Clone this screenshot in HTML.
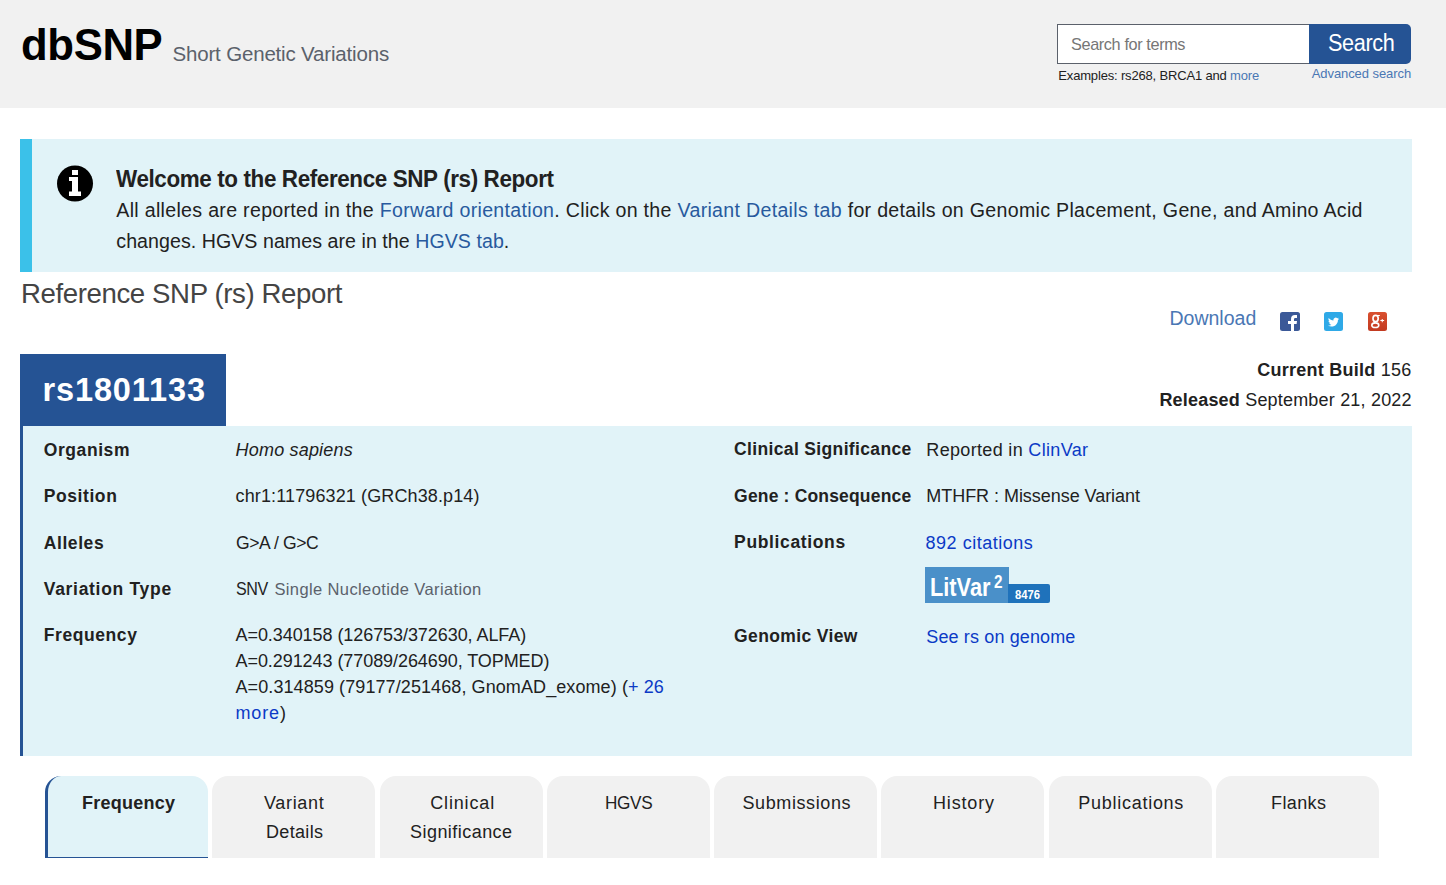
<!DOCTYPE html>
<html><head><meta charset="utf-8">
<style>
html,body{margin:0;padding:0;width:1446px;height:885px;overflow:hidden;background:#fff;font-family:"Liberation Sans",sans-serif;}
.t,.t2{position:absolute;white-space:nowrap;line-height:normal;}
.abs{position:absolute;}
#hdr{left:0;top:0;width:1446px;height:108px;background:#f1f1f1;}
#inp{left:1057px;top:24px;width:252px;height:38px;background:#fff;border:1px solid #5b616b;border-right:none;}
#btn{left:1309px;top:24px;width:102px;height:40px;background:#255394;border-radius:0 5px 5px 0;}
#alert{left:20px;top:139px;width:1392px;height:133px;background:#e1f3f8;}
#alertb{left:20px;top:139px;width:12px;height:133px;background:#3bc1e9;}
#rsbox{left:20px;top:354px;width:206px;height:72px;background:#255394;}
#sum{left:20px;top:426px;width:1392px;height:330px;background:#e1f3f8;}
#sumb{left:20px;top:426px;width:3px;height:330px;background:#255394;}
.tab{position:absolute;top:776px;width:163px;height:82px;background:#f1f1f1;border-radius:16px 16px 0 0;}
.tab.act{background:#e1f3f8;box-sizing:border-box;border-left:3px solid #255394;border-bottom:1px solid #255394;}
.soc{position:absolute;top:312px;width:19px;height:19px;border-radius:2px;}
</style></head><body>
<div class="abs" id="hdr"></div>
<div class="abs" id="inp"></div>
<div class="abs" id="btn"></div>
<div class="abs" id="alert"></div>
<div class="abs" id="alertb"></div>
<svg class="abs" style="left:57px;top:165px" width="37" height="37" viewBox="0 0 37 37">
 <circle cx="18" cy="18.5" r="18" fill="#000"/>
 <rect x="15" y="5" width="6" height="5" fill="#fff"/>
 <path d="M12 12 H21 V26.5 H24 V31 H12 V26.5 H15 V16 H12 Z" fill="#fff"/>
</svg>
<svg class="abs" style="left:1280px;top:312px" width="20" height="19" viewBox="0 0 20 19">
 <rect x="0" y="0" width="20" height="19" rx="2.5" fill="#3b5998"/>
 <path d="M11 19 V12 H8 V9 H11 V7.2 Q11 3 15 3 H17 V6 H15.2 Q14 6 14 7.3 V9 H17 L16.6 12 H14 V19 Z" fill="#fff"/>
</svg>
<svg class="abs" style="left:1324px;top:312px" width="19" height="19" viewBox="0 0 19 19">
 <rect x="0" y="0" width="19" height="19" rx="2.5" fill="#2fa9e7"/>
 <g transform="translate(4,4.6) scale(0.46)"><path fill="#fff" d="M23.953 4.57a10 10 0 01-2.825.775 4.958 4.958 0 002.163-2.723c-.951.555-2.005.959-3.127 1.184a4.92 4.92 0 00-8.384 4.482C7.69 8.095 4.067 6.13 1.64 3.162a4.822 4.822 0 00-.666 2.475c0 1.71.87 3.213 2.188 4.096a4.904 4.904 0 01-2.228-.616v.06a4.923 4.923 0 003.946 4.827 4.996 4.996 0 01-2.212.085 4.936 4.936 0 004.604 3.417 9.867 9.867 0 01-6.102 2.105c-.39 0-.779-.023-1.17-.067a13.995 13.995 0 007.557 2.209c9.053 0 13.998-7.496 13.998-13.985 0-.21 0-.42-.015-.63A9.935 9.935 0 0024 4.59z"/></g>
</svg>
<svg class="abs" style="left:1368px;top:312px" width="19" height="19" viewBox="0 0 19 19">
 <defs><linearGradient id="gp" x1="0" y1="0" x2="0" y2="1"><stop offset="0" stop-color="#d9502f"/><stop offset="1" stop-color="#c23a20"/></linearGradient></defs>
 <rect x="0" y="0" width="19" height="19" rx="2.5" fill="url(#gp)"/>
 <ellipse cx="7.6" cy="6.4" rx="2.6" ry="3.1" fill="none" stroke="#fff" stroke-width="1.7"/>
 <path d="M7.2 3.1 H11.8 V4.1 H9.6 Z" fill="#fff"/>
 <path d="M6.6 9.2 Q5.6 10.4 7.4 10.9" fill="none" stroke="#fff" stroke-width="1.3"/>
 <ellipse cx="7.3" cy="13.2" rx="3.5" ry="2.3" fill="none" stroke="#fff" stroke-width="1.6"/>
 <path d="M12.4 8.1 H16.1 V9.1 H12.4 Z M13.75 6.9 H14.75 V10.3 H13.75 Z" fill="#fff"/>
</svg>
<div class="abs" id="rsbox"></div>
<div class="abs" id="sum"></div>
<div class="abs" id="sumb"></div>
<div class="abs" style="left:925px;top:567px;width:84px;height:36px;background:#4a90c9"></div>
<div class="abs" style="left:1008px;top:584px;width:42px;height:19px;background:#1f72bb;border-radius:0 2px 2px 0"></div>
<div class="t2" style="left:930px;top:573px;font-size:25px;font-weight:bold;color:#fff;transform:scaleX(0.87);transform-origin:0 0;line-height:normal">LitVar</div>
<div class="t2" style="left:994px;top:572px;font-size:18px;font-weight:bold;color:#fff;line-height:normal;transform:scaleX(0.85);transform-origin:0 0">2</div>
<div class="t2" style="left:1015px;top:588px;font-size:12.5px;font-weight:bold;color:#fff;line-height:normal;transform:scaleX(0.9);transform-origin:0 0">8476</div>
<div class="tab act" style="left:45.00px"></div>
<div class="tab" style="left:212.25px"></div>
<div class="tab" style="left:379.50px"></div>
<div class="tab" style="left:546.75px"></div>
<div class="tab" style="left:714.00px"></div>
<div class="tab" style="left:881.25px"></div>
<div class="tab" style="left:1048.50px"></div>
<div class="tab" style="left:1215.75px"></div>
<div class="t" id="dbsnp" style="left:21.00px;top:19.16px;font-size:44.80px;letter-spacing:-0.400px;color:#000;transform:scaleX(0.9760);transform-origin:0 0;font-weight:bold;"><span>dbSNP</span></div>
<div class="t" id="sgv" style="left:172.50px;top:41.65px;font-size:20.50px;letter-spacing:-0.174px;color:#5b616b;"><span>Short Genetic Variations</span></div>
<div class="t" id="ph" style="left:1070.80px;top:35.12px;font-size:17.00px;letter-spacing:-0.400px;color:#767676;transform:scaleX(0.9570);transform-origin:0 0;"><span>Search for terms</span></div>
<div class="t" id="srch" style="left:1328.00px;top:30.48px;font-size:23.00px;letter-spacing:-0.400px;color:#fff;transform:scaleX(0.9411);transform-origin:0 0;"><span>Search</span></div>
<div class="t" id="ex" style="left:1058.30px;top:68.44px;font-size:13.00px;letter-spacing:-0.167px;color:#212121;"><span>Examples: rs268, BRCA1 and <span style="color:#4a77b4">more</span></span></div>
<div class="t" id="adv" style="left:1311.70px;top:65.94px;font-size:13.00px;letter-spacing:-0.071px;color:#4a77b4;"><span>Advanced search</span></div>
<div class="t" id="wt" style="left:116.30px;top:165.99px;font-size:23.10px;letter-spacing:-0.400px;color:#212121;transform:scaleX(0.9718);transform-origin:0 0;font-weight:bold;"><span>Welcome to the Reference SNP (rs) Report</span></div>
<div class="t" id="l1" style="left:116.30px;top:198.51px;font-size:19.60px;letter-spacing:0.302px;color:#212121;"><span>All alleles are reported in the <span style="color:#285a9e">Forward orientation</span>. Click on the <span style="color:#285a9e">Variant Details tab</span> for details on Genomic Placement, Gene, and Amino Acid</span></div>
<div class="t" id="l2" style="left:116.30px;top:229.66px;font-size:19.60px;letter-spacing:0.051px;color:#212121;"><span>changes. HGVS names are in the <span style="color:#285a9e">HGVS tab</span>.</span></div>
<div class="t" id="rsr" style="left:21.20px;top:277.39px;font-size:28.30px;letter-spacing:-0.400px;color:#444;transform:scaleX(0.9753);transform-origin:0 0;"><span>Reference SNP (rs) Report</span></div>
<div class="t" id="dl" style="left:1169.50px;top:306.85px;font-size:19.50px;letter-spacing:0.000px;color:#4a77b4;"><span>Download</span></div>
<div class="t" id="cb" style="left:1257.20px;top:360.01px;font-size:18.00px;letter-spacing:0.250px;color:#212121;"><span><b>Current Build</b> 156</span></div>
<div class="t" id="rel" style="left:1159.40px;top:389.71px;font-size:18.00px;letter-spacing:0.192px;color:#212121;"><span><b>Released</b> September 21, 2022</span></div>
<div class="t" id="rs" style="left:42.50px;top:371.89px;font-size:32.50px;letter-spacing:0.875px;color:#fff;font-weight:bold;"><span>rs1801133</span></div>
<div class="t" id="org" style="left:43.80px;top:440.36px;font-size:17.50px;letter-spacing:0.571px;color:#212121;font-weight:bold;"><span>Organism</span></div>
<div class="t" id="pos" style="left:43.80px;top:486.46px;font-size:17.50px;letter-spacing:0.571px;color:#212121;font-weight:bold;"><span>Position</span></div>
<div class="t" id="all" style="left:43.80px;top:533.26px;font-size:17.50px;letter-spacing:0.571px;color:#212121;font-weight:bold;"><span>Alleles</span></div>
<div class="t" id="vt" style="left:43.80px;top:578.96px;font-size:17.50px;letter-spacing:0.692px;color:#212121;font-weight:bold;"><span>Variation Type</span></div>
<div class="t" id="frq" style="left:43.80px;top:624.96px;font-size:17.50px;letter-spacing:0.571px;color:#212121;font-weight:bold;"><span>Frequency</span></div>
<div class="t" id="homo" style="left:235.60px;top:440.01px;font-size:18.00px;letter-spacing:0.182px;color:#212121;font-style:italic;"><span>Homo sapiens</span></div>
<div class="t" id="chr" style="left:235.60px;top:486.11px;font-size:18.00px;letter-spacing:0.120px;color:#212121;"><span>chr1:11796321 (GRCh38.p14)</span></div>
<div class="t" id="ga" style="left:235.60px;top:532.81px;font-size:18.00px;letter-spacing:-0.400px;color:#212121;transform:scaleX(0.9742);transform-origin:0 0;"><span>G&gt;A / G&gt;C</span></div>
<div class="t" id="snv" style="left:235.60px;top:578.51px;font-size:18.00px;letter-spacing:-0.400px;color:#212121;transform:scaleX(0.8926);transform-origin:0 0;"><span>SNV</span></div>
<div class="t" id="snv2" style="left:274.40px;top:579.87px;font-size:16.50px;letter-spacing:0.385px;color:#5b616b;"><span>Single Nucleotide Variation</span></div>
<div class="t" id="f1" style="left:235.50px;top:625.31px;font-size:18.00px;letter-spacing:-0.065px;color:#212121;"><span>A=0.340158 (126753/372630, ALFA)</span></div>
<div class="t" id="f2" style="left:235.50px;top:651.11px;font-size:18.00px;letter-spacing:-0.065px;color:#212121;"><span>A=0.291243 (77089/264690, TOPMED)</span></div>
<div class="t" id="f3" style="left:235.50px;top:677.21px;font-size:18.00px;letter-spacing:0.091px;color:#212121;"><span>A=0.314859 (79177/251468, GnomAD_exome) (<span style="color:#0b3ac6">+ 26</span></span></div>
<div class="t" id="f4" style="left:235.50px;top:703.21px;font-size:18.00px;letter-spacing:0.861px;color:#212121;"><span><span style="color:#0b3ac6">more</span>)</span></div>
<div class="t" id="cs" style="left:734.10px;top:439.36px;font-size:17.50px;letter-spacing:0.350px;color:#212121;font-weight:bold;"><span>Clinical Significance</span></div>
<div class="t" id="gc" style="left:734.10px;top:485.76px;font-size:17.50px;letter-spacing:0.176px;color:#212121;font-weight:bold;"><span>Gene : Consequence</span></div>
<div class="t" id="pub" style="left:734.10px;top:532.36px;font-size:17.50px;letter-spacing:0.636px;color:#212121;font-weight:bold;"><span>Publications</span></div>
<div class="t" id="gv" style="left:734.10px;top:626.36px;font-size:17.50px;letter-spacing:0.364px;color:#212121;font-weight:bold;"><span>Genomic View</span></div>
<div class="t" id="rep" style="left:926.30px;top:440.11px;font-size:18.00px;letter-spacing:0.333px;color:#212121;"><span>Reported in <span style="color:#0b3ac6">ClinVar</span></span></div>
<div class="t" id="mth" style="left:926.30px;top:485.51px;font-size:18.00px;letter-spacing:-0.043px;color:#212121;"><span>MTHFR : Missense Variant</span></div>
<div class="t" id="cit" style="left:925.60px;top:532.91px;font-size:18.00px;letter-spacing:0.500px;color:#0b3ac6;"><span>892 citations</span></div>
<div class="t" id="see" style="left:926.30px;top:627.11px;font-size:18.00px;letter-spacing:0.133px;color:#0b3ac6;"><span>See rs on genome</span></div>
<div class="t" id="tb0" style="left:82.00px;top:792.91px;font-size:18.00px;letter-spacing:0.250px;color:#212121;font-weight:bold;"><span>Frequency</span></div>
<div class="t" id="tb1a" style="left:264.00px;top:792.91px;font-size:18.00px;letter-spacing:0.667px;color:#212121;"><span>Variant</span></div>
<div class="t" id="tb1b" style="left:266.00px;top:822.11px;font-size:18.00px;letter-spacing:0.333px;color:#212121;"><span>Details</span></div>
<div class="t" id="tb2a" style="left:430.20px;top:792.91px;font-size:18.00px;letter-spacing:0.857px;color:#212121;"><span>Clinical</span></div>
<div class="t" id="tb2b" style="left:410.00px;top:822.11px;font-size:18.00px;letter-spacing:0.455px;color:#212121;"><span>Significance</span></div>
<div class="t" id="tb3" style="left:605.20px;top:792.91px;font-size:18.00px;letter-spacing:-0.400px;color:#212121;transform:scaleX(0.9557);transform-origin:0 0;"><span>HGVS</span></div>
<div class="t" id="tb4" style="left:742.50px;top:792.91px;font-size:18.00px;letter-spacing:0.600px;color:#212121;"><span>Submissions</span></div>
<div class="t" id="tb5" style="left:933.00px;top:792.91px;font-size:18.00px;letter-spacing:0.833px;color:#212121;"><span>History</span></div>
<div class="t" id="tb6" style="left:1078.30px;top:792.91px;font-size:18.00px;letter-spacing:0.727px;color:#212121;"><span>Publications</span></div>
<div class="t" id="tb7" style="left:1271.00px;top:792.91px;font-size:18.00px;letter-spacing:0.400px;color:#212121;"><span>Flanks</span></div>
</body></html>
